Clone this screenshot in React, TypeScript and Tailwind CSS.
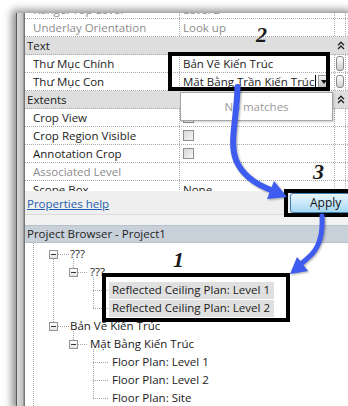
import type { ReactNode } from 'react'

const line = 'border-dotted border-[#a9a9a9]'

function Chevrons() {
  return (
    <svg width="8" height="9" viewBox="0 0 8 9">
      <path d="M1 4.2 L4 1.2 L7 4.2 M1 8 L4 5 L7 8" fill="none" stroke="#222" strokeWidth="1.3" />
    </svg>
  )
}

function Checkbox() {
  return <div className="h-[11px] w-[11px] border border-[#8e8e8e] bg-gradient-to-br from-[#d8d8d8] to-[#f7f7f7]" />
}

function EditBtn({ tall }: { tall?: boolean }) {
  return (
    <div
      className={`w-[8px] rounded-[3px] border border-[#8a8a8a] bg-gradient-to-b from-white to-[#cdcdcd] ${tall ? 'h-[15px]' : 'h-[13px]'}`}
    />
  )
}

function PropRow({
  name,
  dim,
  cut,
  children,
  btn,
}: {
  name: string
  dim?: boolean
  cut?: boolean
  children?: ReactNode
  btn?: ReactNode
}) {
  return (
    <div className={`grid h-[18px] grid-cols-[155px_155px_11px_1fr] border-b ${line} ${cut ? 'pb-[5px]' : ''}`}>
      <div className={`flex items-center whitespace-nowrap border-r pl-[8px] ${line} ${dim ? 'text-[#8c8c8c]' : ''}`}>{name}</div>
      <div className={`flex items-center whitespace-nowrap border-r pl-[3px] ${line}`}>{children}</div>
      <div className={`flex items-center justify-center border-r ${line}`}>{btn}</div>
      <div />
    </div>
  )
}

function Category({ label }: { label: string }) {
  return (
    <div className={`grid h-[18px] grid-cols-[310px_11px_1fr] border-b bg-[#dedede] ${line}`}>
      <div className="flex items-center pl-[2px]">{label}</div>
      <div className="flex items-center justify-center">
        <Chevrons />
      </div>
      <div />
    </div>
  )
}

function MinusBox() {
  return (
    <div className="flex h-[9px] w-[9px] items-center justify-center border border-[#939393] bg-gradient-to-b from-white to-[#e4e4e4]">
      <div className="h-px w-[5px] bg-[#333]" />
    </div>
  )
}

type Node = { level: 1 | 2 | 3; text: string; sel?: boolean }

const tree: Node[] = [
  { level: 1, text: '???' },
  { level: 2, text: '???' },
  { level: 3, text: 'Reflected Ceiling Plan: Level 1', sel: true },
  { level: 3, text: 'Reflected Ceiling Plan: Level 2', sel: true },
  { level: 1, text: 'Bản Vẽ Kiến Trúc' },
  { level: 2, text: 'Mặt Bằng Kiến Trúc' },
  { level: 3, text: 'Floor Plan: Level 1' },
  { level: 3, text: 'Floor Plan: Level 2' },
  { level: 3, text: 'Floor Plan: Site' },
]

function TreeRow({ node }: { node: Node }) {
  if (node.level === 3) {
    return (
      <div className="flex h-[18px] items-center pl-[84px]">
        <span className={`flex h-[17px] items-center whitespace-nowrap px-[3px] ${node.sel ? 'bg-[#e0e0e0] pr-[4px]' : ''}`}>{node.text}</span>
      </div>
    )
  }
  return (
    <div className={`flex h-[18px] items-center ${node.level === 1 ? 'pl-[24px]' : 'pl-[44px]'}`}>
      <MinusBox />
      <span className="ml-[12px] whitespace-nowrap">{node.text}</span>
    </div>
  )
}

function TreeLines() {
  const d = [
    'M8.5 0 V170',
    'M28.5 16 V79',
    'M33 11.5 H44',
    'M33 83.5 H44',
    'M48.5 16 V25',
    'M48.5 88 V97',
    'M53 29.5 H63',
    'M53 101.5 H63',
    'M68.5 34 V65',
    'M68 47.5 H84',
    'M68 65.5 H84',
    'M68.5 106 V155',
    'M68 119.5 H84',
    'M68 137.5 H84',
    'M68 155.5 H84',
  ].join(' ')
  return (
    <svg className="pointer-events-none absolute left-0 top-0" width="331" height="170">
      <path d={d} fill="none" stroke="#a3a3a3" strokeWidth="1" strokeDasharray="1 1" />
    </svg>
  )
}

function Arrows() {
  return (
    <svg
      className="pointer-events-none absolute left-0 top-0 drop-shadow-[1px_1px_1px_rgba(0,0,0,0.35)]"
      width="348"
      height="406"
    >
      <g fill="none" stroke="#3f5cf1" strokeLinecap="round">
        <path d="M237.5 87 C 237 118, 229 142, 236 160 C 242 175, 255 184, 271 190" strokeWidth="6" />
        <path d="M322 216 C 323 232, 320 245, 312 254 C 307 259, 304 261, 301 264" strokeWidth="5" />
      </g>
      <g fill="#3f5cf1">
        <polygon points="287,197 267,199 274,181" />
        <polygon points="290,274 308,271 297,257" />
      </g>
    </svg>
  )
}

export default function App() {
  return (
    <div className="relative h-[406px] w-[348px] overflow-hidden bg-white font-['Open_Sans',sans-serif] text-[11.5px] text-[#1b1b1b]">
      <div className="ml-[16px] mt-[13px] flex h-[400px] w-[340px] shadow-[-4px_-3px_8px_rgba(0,0,0,0.45)]">
        <div className="flex w-[9px] shrink-0">
          <div className="w-px bg-[#5a5a5a]" />
          <div className="w-[6px] bg-gradient-to-r from-[#d9d9d9] to-[#c2c2c2]" />
          <div className="w-px bg-[#9a9a9a]" />
          <div className="w-px bg-[#767676]" />
        </div>
        <div className="flex flex-1 flex-col">
          <div className="h-[178px] overflow-hidden bg-white">
            <div className="-mt-[12px]">
              <PropRow name="Range: Top Level" dim cut>
                <span className="text-[#8c8c8c]">Level 2</span>
              </PropRow>
              <PropRow name="Underlay Orientation" dim>
                <span className="text-[#8c8c8c]">Look up</span>
              </PropRow>
              <Category label="Text" />
              <PropRow name="Thư Mục Chính" btn={<EditBtn tall />}>
                Bản Vẽ Kiến Trúc
              </PropRow>
              <PropRow name="Thư Mục Con" btn={<EditBtn />}>
                <span>Mặt Bằng Trần Kiến Trúc</span>
                <span className="ml-[1px] h-[14px] w-px shrink-0 bg-black" />
                <span className="ml-auto mr-[5px] flex h-[13px] w-[11px] shrink-0 items-center justify-center border border-[#9a9a9a] bg-gradient-to-b from-[#f4f4f4] to-[#c4c4c4]">
                  <svg width="6" height="4" viewBox="0 0 6 4">
                    <path d="M0 0 H6 L3 4 Z" fill="#111" />
                  </svg>
                </span>
              </PropRow>
              <Category label="Extents" />
              <PropRow name="Crop View">
                <Checkbox />
              </PropRow>
              <PropRow name="Crop Region Visible">
                <Checkbox />
              </PropRow>
              <PropRow name="Annotation Crop">
                <Checkbox />
              </PropRow>
              <PropRow name="Associated Level" dim />
              <PropRow name="Scope Box">None</PropRow>
            </div>
          </div>
          <div className="flex h-[23px] items-start bg-[#efefef]">
            <span className="mt-[4px] pl-[2px] text-[#1d5fae] underline">Properties help</span>
            <div className="ml-auto mt-[2px] flex h-[20px] w-[66px] items-center rounded-[3px] border border-[#3c7fb1] bg-gradient-to-b from-[#eaf6fd] to-[#a5d8f4] pl-[19px] text-[12px] text-[#111]">
              Apply
            </div>
          </div>
          <div className="h-[11px] border-t border-[#dcdcdc] bg-[#f2f2f2]" />
          <div className="flex h-[18px] items-center border-y border-[#b9c1cb] bg-[#c8d0da] pl-[2px] text-[#1e1e1e]">
            Project Browser - Project1
          </div>
          <div className="relative flex-1 bg-white pt-[2px]">
            <TreeLines />
            {tree.map((n, i) => (
              <TreeRow key={i} node={n} />
            ))}
          </div>
        </div>
      </div>

      <div className="absolute left-[180px] top-[92px] flex h-[29px] w-[153px] items-center justify-center border border-[#a7a7a7] bg-white text-[#9a9a9a] shadow-[1px_1px_2px_rgba(0,0,0,0.2)]">
        No matches
      </div>
      <div className="absolute left-[168px] top-[52px] h-[39px] w-[162px] border-[4px] border-black" />
      <div className="absolute left-[284px] top-[189px] h-[28px] w-[70px] border-[4px] border-black" />
      <div className="absolute left-[102px] top-[273px] h-[49px] w-[188px] border-[4px] border-black" />

      <span className="absolute left-[256px] top-[24px] font-['Liberation_Serif',serif] text-[22px] font-bold italic leading-none">2</span>
      <span className="absolute left-[313px] top-[161px] font-['Liberation_Serif',serif] text-[22px] font-bold italic leading-none">3</span>
      <span className="absolute left-[173px] top-[249px] font-['Liberation_Serif',serif] text-[22px] font-bold italic leading-none">1</span>

      <Arrows />
    </div>
  )
}
